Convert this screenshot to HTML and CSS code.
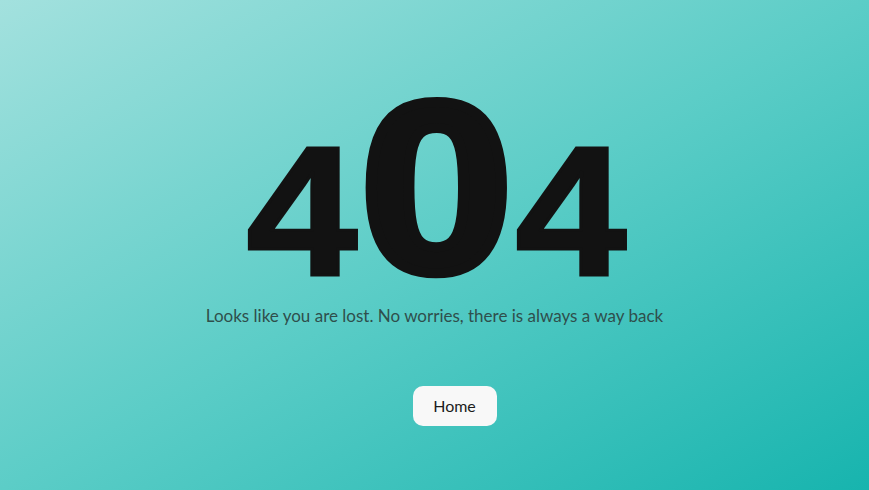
FILE: index.html
```html
<!DOCTYPE html>
<html lang="en">
<head>
<meta charset="utf-8">
<title>404</title>
<link rel="stylesheet" href="styles.css">
</head>
<body>
<main class="page">
  <div class="digits">
    <span class="digit four">4</span>
    <span class="digit zero">0</span>
    <span class="digit four">4</span>
  </div>
  <p class="message">Looks like you are lost. No worries, there is always a way back</p>
  <a class="home-btn" href="#">Home</a>
</main>
</body>
</html>
```
FILE: styles.css
```css
* { box-sizing: border-box; }
html, body { margin: 0; padding: 0; }
body {
  height: 100vh;
  overflow: hidden;
  background: linear-gradient(to bottom right, #a3e1de 0%, #5ccdc7 50%, #17b4ae 100%);
  font-family: "Lato", "Noto Sans", sans-serif;
}
.page {
  display: flex;
  flex-direction: column;
  align-items: center;
}
.digits {
  display: flex;
  justify-content: center;
  align-items: baseline;
  padding-top: 100px;
  margin-left: 4px;
  color: #121212;
}
.digit {
  display: inline-block;
  text-align: center;
  font-family: "Liberation Sans", Arial, sans-serif;
  font-weight: 700;
  line-height: 0.76;
  -webkit-text-stroke: 3px #121212;
}
.four {
  font-size: 183px;
  width: 118px;
  transform: scaleX(1.09);
}
.zero {
  font-size: 242px;
  width: 151px;
  -webkit-text-stroke: 10px #121212;
  transform: translateY(-4px) scaleX(1.13);
}
.message {
  margin: 22px 0 0;
  font-size: 17px;
  line-height: 20px;
  color: #2f4f4c;
}
.home-btn {
  margin: 60px 0 0 40px;
  width: 84px;
  height: 40px;
  border-radius: 10px;
  background: #f8f8f8;
  color: #1c1c1c;
  text-decoration: none;
  font-size: 16px;
  display: flex;
  align-items: center;
  justify-content: center;
}
```
